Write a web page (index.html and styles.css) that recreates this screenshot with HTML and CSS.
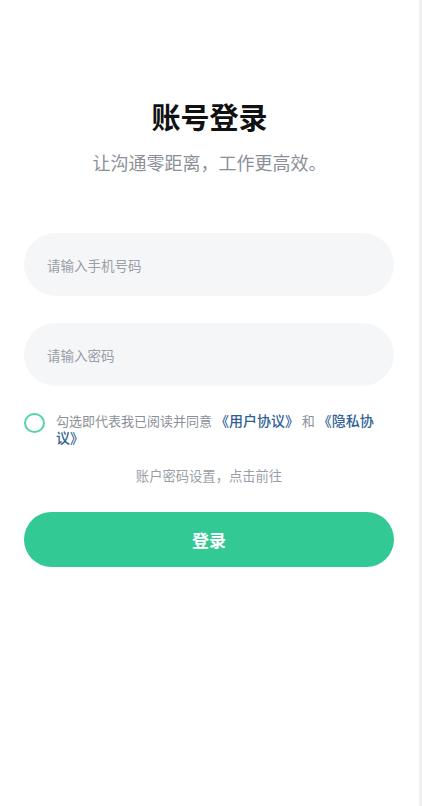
FILE: index.html
```html
<!DOCTYPE html>
<html>
<head>
    <meta charset="utf-8">
    <title>账号登录</title>
    <link rel="stylesheet" href="styles.css">
</head>
<body>
    <div class="page">
        <div class="head">
            <h1 class="title">账号登录</h1>
            <p class="sub">让沟通零距离，工作更高效。</p>
        </div>
        <div class="form">
            <input class="field" type="text" placeholder="请输入手机号码">
            <input class="field" type="password" placeholder="请输入密码">
            <div class="agree">
                <span class="check"></span>
                <p class="agree-text">勾选即代表我已阅读并同意 <a href="javascript:;">《用户协议》</a> 和 <a href="javascript:;">《隐私协议》</a></p>
            </div>
            <p class="hint">账户密码设置，点击前往</p>
            <a href="javascript:;" class="btn">登录</a>
        </div>
    </div>
</body>
</html>
```

FILE: styles.css
```css
*{
    margin: 0;
    padding: 0;
    box-sizing: border-box;
}
body{
    background: #fff;
    font-family: "Noto Sans CJK SC", "Noto Sans", sans-serif;
}
.page{
    width: 422px;
    min-height: 806px;
    border-right: 3px solid #efefef;
    background: #fff;
}
.head{
    padding-top: 97px;
    text-align: center;
}
.title{
    font-size: 29px;
    line-height: 38px;
    font-weight: 700;
    color: #111;
}
.sub{
    margin-top: 15px;
    font-size: 18px;
    line-height: 24px;
    color: #8b9098;
}
.form{
    padding: 59px 25px 0 24px;
    display: flex;
    flex-direction: column;
}
.field{
    height: 63px;
    border: none;
    outline: none;
    border-radius: 32px;
    background: #f5f6f8;
    padding-left: 23px;
    font-family: inherit;
    font-size: 13.5px;
    color: #333;
}
.field + .field{
    margin-top: 27px;
}
.field::placeholder{
    color: #9a9ea6;
}
.agree{
    margin-top: 27px;
    display: flex;
    align-items: flex-start;
    gap: 11px;
}
.check{
    flex: none;
    width: 21px;
    height: 20px;
    border: 2px solid #52d3a3;
    border-radius: 50%;
}
.agree-text{
    margin-top: -1px;
    font-size: 13px;
    line-height: 17px;
    color: #8b9098;
}
.agree-text a{
    font-size: 14px;
    color: #2f6294;
    font-weight: 500;
    text-decoration: none;
}
.hint{
    margin-top: 20px;
    text-align: center;
    font-size: 13.3px;
    line-height: 20px;
    color: #9a9ea6;
}
.btn{
    margin-top: 26px;
    height: 55px;
    border-radius: 28px;
    background: #33c994;
    color: #fff;
    font-size: 17px;
    font-weight: 700;
    text-decoration: none;
    display: flex;
    align-items: center;
    justify-content: center;
}
```
